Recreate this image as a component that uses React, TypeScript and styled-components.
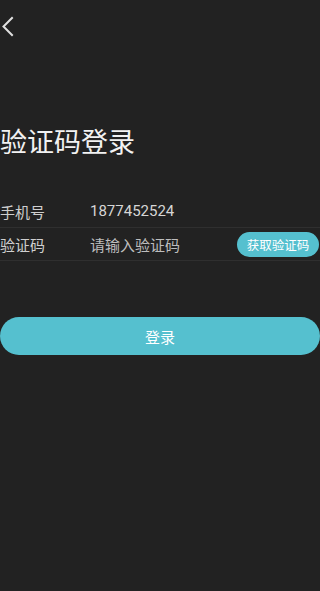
import React from "react";
import styled, { createGlobalStyle } from "styled-components";

const Global = createGlobalStyle`
  html, body { margin: 0; padding: 0; background: #222222; }
  body { font-family: Roboto, "Noto Sans CJK SC", sans-serif; }
  * { box-sizing: border-box; }
`;

const Page = styled.div`
  width: 320px;
  min-height: 591px;
  background: #222222;
  display: flex;
  flex-direction: column;
`;

const Header = styled.div`
  height: 54px;
  display: flex;
  align-items: center;
  padding-left: 1px;
`;

const BackButton = styled.button`
  background: none;
  border: none;
  padding: 0;
  width: 16px;
  height: 24px;
  display: flex;
  align-items: center;
  cursor: pointer;
`;

const Title = styled.h1`
  margin: 68px 0 0 0;
  font-family: "Noto Sans CJK SC", sans-serif;
  font-size: 27px;
  font-weight: 400;
  line-height: 38px;
  color: #f2f2f2;
  letter-spacing: 0;
`;

const Form = styled.div`
  margin-top: 35px;
  display: flex;
  flex-direction: column;
`;

const Row = styled.div`
  height: 33px;
  display: flex;
  align-items: center;
  border-bottom: 1px solid #2f2f2f;
`;

const Label = styled.span`
  width: 90px;
  font-family: "Noto Sans CJK SC", sans-serif;
  font-size: 15px;
  color: #cfcfcf;
`;

const Value = styled.span<{ $placeholder?: boolean }>`
  flex: 1;
  font-family: Roboto, "Noto Sans CJK SC", sans-serif;
  font-size: 15px;
  color: ${(p) => (p.$placeholder ? "#bdbdbd" : "#d6d6d6")};
`;

const CodeButton = styled.button`
  height: 25px;
  width: 82px;
  margin-right: 1px;
  padding: 0;
  border: none;
  border-radius: 13px;
  background: #55c0cf;
  color: #ffffff;
  font-family: "Noto Sans CJK SC", sans-serif;
  font-size: 12.5px;
  line-height: 25px;
  text-align: center;
  cursor: pointer;
`;

const LoginButton = styled.button`
  margin-top: 56px;
  height: 38px;
  width: 320px;
  border: none;
  border-radius: 19px;
  background: #55c0cf;
  color: #ffffff;
  font-family: "Noto Sans CJK SC", sans-serif;
  font-size: 15px;
  cursor: pointer;
`;

export default function App() {
  return (
    <Page>
      <Global />
      <Header>
        <BackButton aria-label="back">
          <svg width="14" height="22" viewBox="0 0 14 22">
            <path d="M11 2 L2.5 10.5 L11 19" fill="none" stroke="#e0e0e0" strokeWidth="2" strokeLinecap="square" />
          </svg>
        </BackButton>
      </Header>
      <Title>验证码登录</Title>
      <Form>
        <Row>
          <Label>手机号</Label>
          <Value>1877452524</Value>
        </Row>
        <Row>
          <Label>验证码</Label>
          <Value $placeholder>请输入验证码</Value>
          <CodeButton>获取验证码</CodeButton>
        </Row>
      </Form>
      <LoginButton>登录</LoginButton>
    </Page>
  );
}
